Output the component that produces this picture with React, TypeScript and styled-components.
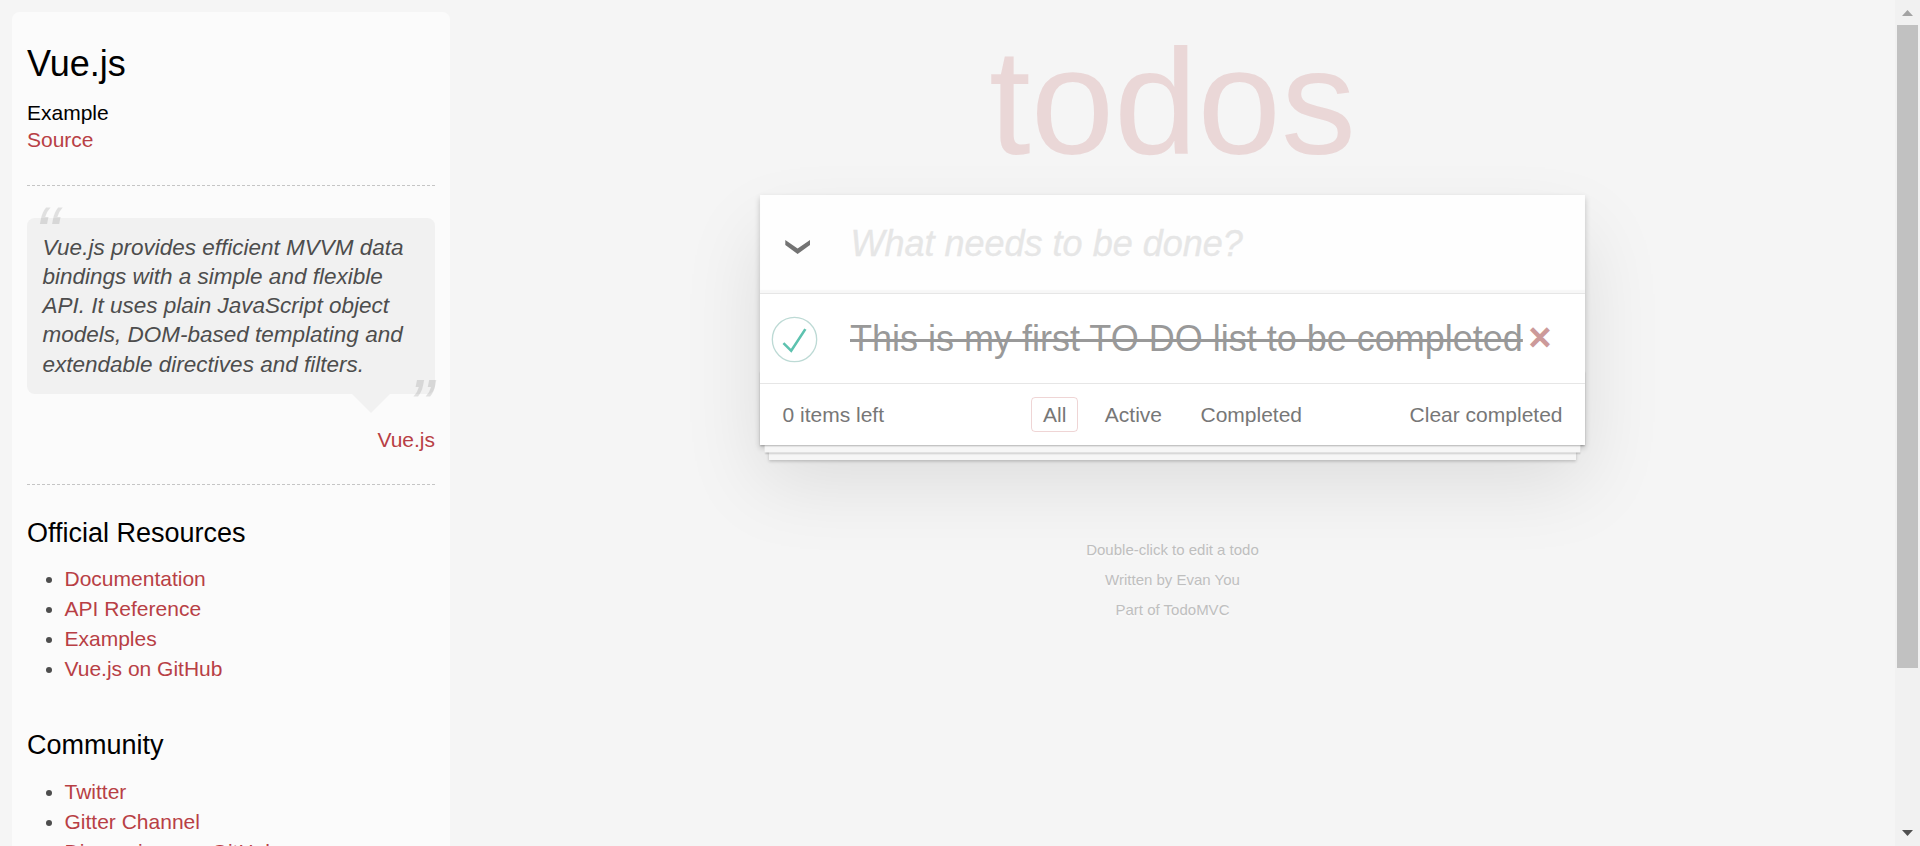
import React from "react";
import styled, { createGlobalStyle } from "styled-components";

const GlobalStyle = createGlobalStyle`
  *, *::before, *::after { box-sizing: border-box; }
  body {
    margin: 0;
    background: #f5f5f5;
    color: #4d4d4d;
    font-family: "Liberation Sans", Arial, Helvetica, sans-serif;
    font-size: 21px;
    overflow: hidden;
  }
  a { color: #b83f45; text-decoration: none; }
`;

const Page = styled.div`
  display: flex;
  height: 846px;
  overflow: hidden;
`;

/* Sidebar */

const Learn = styled.aside`
  flex: none;
  width: 438px;
  height: 1100px;
  margin: 12px 0 0 12px;
  padding: 30px 15px 15px;
  border-radius: 7.5px;
  background: rgba(255, 255, 255, 0.6);
`;

const Framework = styled.h3`
  margin: 0 0 14px;
  font-size: 36px;
  font-weight: 400;
  line-height: 43px;
  color: #000;
`;

const SourceLinks = styled.div`
  display: flex;
  flex-direction: column;
  line-height: 27px;
`;

const SourceTitle = styled.h5`
  margin: 0;
  font-size: 21px;
  font-weight: 400;
  color: #000;
`;

const Divider = styled.hr`
  margin: 32px 0;
  border: 0;
  border-top: 1px dashed #c5c5c5;
`;

const Quote = styled.blockquote`
  margin: 0 0 -1px;
`;

const Bubble = styled.div`
  position: relative;
  padding: 14.5px 15px 15px 15.5px;
  height: 176px;
  border-radius: 7.5px;
  background: rgba(0, 0, 0, 0.04);

  &::after {
    content: "";
    position: absolute;
    top: 100%;
    right: 45px;
    border: 19.5px solid transparent;
    border-top-color: rgba(0, 0, 0, 0.04);
  }
`;

const QuoteText = styled.p`
  margin: 0;
  font-size: 22.5px;
  font-style: italic;
  line-height: 29.25px;
  white-space: nowrap;
`;

const Mark = styled.span<{ $closing?: boolean }>`
  position: absolute;
  ${(p) => (p.$closing ? "right: 1.5px; bottom: -60px;" : "left: 7.5px; top: -33px;")}
  font-size: 75px;
  font-style: italic;
  line-height: 97.5px;
  color: #000;
  opacity: 0.1;
`;

const Attribution = styled.footer`
  margin-top: 32px;
  line-height: 27px;
  text-align: right;
`;

const SectionTitle = styled.h4<{ $gap?: number }>`
  margin: 0 0 ${(p) => p.$gap ?? 15}px;
  font-size: 27px;
  font-weight: 400;
  line-height: 32px;
  color: #000;
`;

const LinkList = styled.ul`
  margin: 0 0 45px;
  padding: 0;
  list-style: none;
`;

const LinkItem = styled.li`
  display: flex;
  align-items: center;
  height: 30px;
  padding-left: 19px;
  line-height: 30px;

  &::before {
    content: "";
    width: 6px;
    height: 6px;
    margin: 2px 12.5px 0 0;
    border-radius: 50%;
    background: #4d4d4d;
  }
`;

/* Todo application */

const Content = styled.main`
  flex: 1;
  display: flex;
  flex-direction: column;
  align-items: center;
`;

const Title = styled.h1`
  margin: 0;
  height: 195px;
  padding-top: 16px;
  font-size: 150px;
  font-weight: 400;
  line-height: 172px;
  color: rgba(175, 47, 47, 0.15);
`;

const Card = styled.section`
  position: relative;
  width: 825px;
  height: 250px;
  background: #fff;
  box-shadow: 0 3px 6px rgba(0, 0, 0, 0.2), 0 37.5px 75px rgba(0, 0, 0, 0.1);
`;

const NewTodo = styled.header`
  display: flex;
  height: 98px;
  padding: 24px 24px 0 25px;
  background: rgba(0, 0, 0, 0.003);
  box-shadow: inset 0 -3px 1.5px rgba(0, 0, 0, 0.03);
`;

const Chevron = styled.svg`
  flex: none;
  width: 26px;
  height: 15px;
  margin: 21px 39.5px 0 0;
`;

const Placeholder = styled.div`
  font-size: 36px;
  font-style: italic;
  line-height: 50px;
  color: #e6e6e6;
  -webkit-text-stroke: 0.3px #e6e6e6;
`;

const TodoItem = styled.div`
  display: flex;
  height: 90px;
  padding: 22px 0 0 11px;
  border-top: 1px solid #e6e6e6;
`;

const Toggle = styled.svg`
  flex: none;
  width: 47px;
  height: 47px;
  margin: -0.5px 32px 0 0;
`;

const TodoLabel = styled.label`
  height: 43px;
  margin-top: 1px;
  font-size: 36px;
  line-height: 43px;
  color: #999;
  text-decoration: line-through 3px;
  white-space: nowrap;
`;

const Destroy = styled.button`
  height: 52px;
  margin: -5.5px 0 0 5.5px;
  padding: 0;
  border: 0;
  background: none;
  color: #cc9a9a;
  font: 40px/52px "Liberation Sans", Arial, sans-serif;
  -webkit-text-stroke: 1.5px #cc9a9a;
`;

const CardFooter = styled.footer`
  position: relative;
  display: grid;
  grid-template-columns: 1fr auto 1fr;
  align-items: center;
  height: 62px;
  padding: 0 22.5px;
  border-top: 1px solid #e6e6e6;
  color: #777;

  &::before {
    content: "";
    position: absolute;
    inset: auto 0 0;
    height: 75px;
    pointer-events: none;
    box-shadow: 0 1.5px 1.5px rgba(0, 0, 0, 0.2), 0 12px 0 -4.5px #f6f6f6,
      0 13.5px 1.5px -4.5px rgba(0, 0, 0, 0.2), 0 24px 0 -9px #f6f6f6,
      0 25.5px 3px -9px rgba(0, 0, 0, 0.2);
  }
`;

const Filters = styled.nav`
  display: flex;
  gap: 15.5px;
`;

const Filter = styled.a<{ $selected?: boolean }>`
  height: 35px;
  padding: 0 10.5px;
  border: 1px solid ${(p) => (p.$selected ? "rgba(175, 47, 47, 0.2)" : "transparent")};
  border-radius: 4px;
  line-height: 33px;
  color: inherit;
`;

const Clear = styled.span`
  justify-self: end;
`;

const Info = styled.footer`
  margin-top: 90px;
  font-size: 15px;
  line-height: 30px;
  text-align: center;
  color: #bfbfbf;
  text-shadow: 0 1.5px 0 rgba(255, 255, 255, 0.5);
`;

/* Scrollbar */

const Scrollbar = styled.div`
  flex: none;
  display: flex;
  flex-direction: column;
  align-items: center;
  width: 25px;
  height: 846px;
  background: #f1f1f1;
`;

const Arrow = styled.svg`
  display: block;
  width: 25px;
  height: 25px;
`;

const Thumb = styled.div`
  width: 21px;
  height: 643px;
  margin-bottom: 153px;
  background: #c1c1c1;
`;

const resources = ["Documentation", "API Reference", "Examples", "Vue.js on GitHub"];
const community = ["Twitter", "Gitter Channel", "Discussions on GitHub"];
const quoteLines = [
  "Vue.js provides efficient MVVM data",
  "bindings with a simple and flexible",
  "API. It uses plain JavaScript object",
  "models, DOM-based templating and",
  "extendable directives and filters.",
];

function Links({ items }: { items: string[] }) {
  return (
    <LinkList>
      {items.map((item) => (
        <LinkItem key={item}>
          <a href="#">{item}</a>
        </LinkItem>
      ))}
    </LinkList>
  );
}

export default function App() {
  return (
    <>
      <GlobalStyle />
      <Page>
        <Learn>
          <Framework>Vue.js</Framework>
          <SourceLinks>
            <SourceTitle>Example</SourceTitle>
            <a href="#">Source</a>
          </SourceLinks>
          <Divider />
          <Quote>
            <Bubble>
              <Mark>“</Mark>
              <QuoteText>
                {quoteLines.map((line) => (
                  <React.Fragment key={line}>
                    {line}
                    <br />
                  </React.Fragment>
                ))}
              </QuoteText>
              <Mark $closing>”</Mark>
            </Bubble>
            <Attribution>
              <a href="#">Vue.js</a>
            </Attribution>
          </Quote>
          <Divider />
          <SectionTitle>Official Resources</SectionTitle>
          <Links items={resources} />
          <SectionTitle $gap={16}>Community</SectionTitle>
          <Links items={community} />
        </Learn>

        <Content>
          <Title>todos</Title>
          <Card>
            <NewTodo>
              <Chevron viewBox="0 0 26 15">
                <path d="M.3 0 12.6 8.6 25 0V5L12.6 14 .3 5z" fill="#737373" />
              </Chevron>
              <Placeholder>What needs to be done?</Placeholder>
            </NewTodo>
            <TodoItem>
              <Toggle viewBox="-3 -3 106 106">
                <circle cx="50" cy="50" r="50" fill="none" stroke="#bddad5" strokeWidth="3" />
                <path d="M72 25L42 71 27 56l-4 4 20 20 34-52z" fill="#5dc2af" />
              </Toggle>
              <TodoLabel>This is my first TO DO list to be completed</TodoLabel>
              <Destroy>×</Destroy>
            </TodoItem>
            <CardFooter>
              <span>0 items left</span>
              <Filters>
                <Filter $selected>All</Filter>
                <Filter>Active</Filter>
                <Filter>Completed</Filter>
              </Filters>
              <Clear>Clear completed</Clear>
            </CardFooter>
          </Card>
          <Info>
            <div>Double-click to edit a todo</div>
            <div>Written by Evan You</div>
            <div>Part of TodoMVC</div>
          </Info>
        </Content>

        <Scrollbar>
          <Arrow viewBox="0 0 25 25">
            <path d="M7 16 12.5 10 18 16z" fill="#a3a3a3" />
          </Arrow>
          <Thumb />
          <Arrow viewBox="0 0 25 25">
            <path d="M7 9 12.5 15 18 9z" fill="#505050" />
          </Arrow>
        </Scrollbar>
      </Page>
    </>
  );
}
